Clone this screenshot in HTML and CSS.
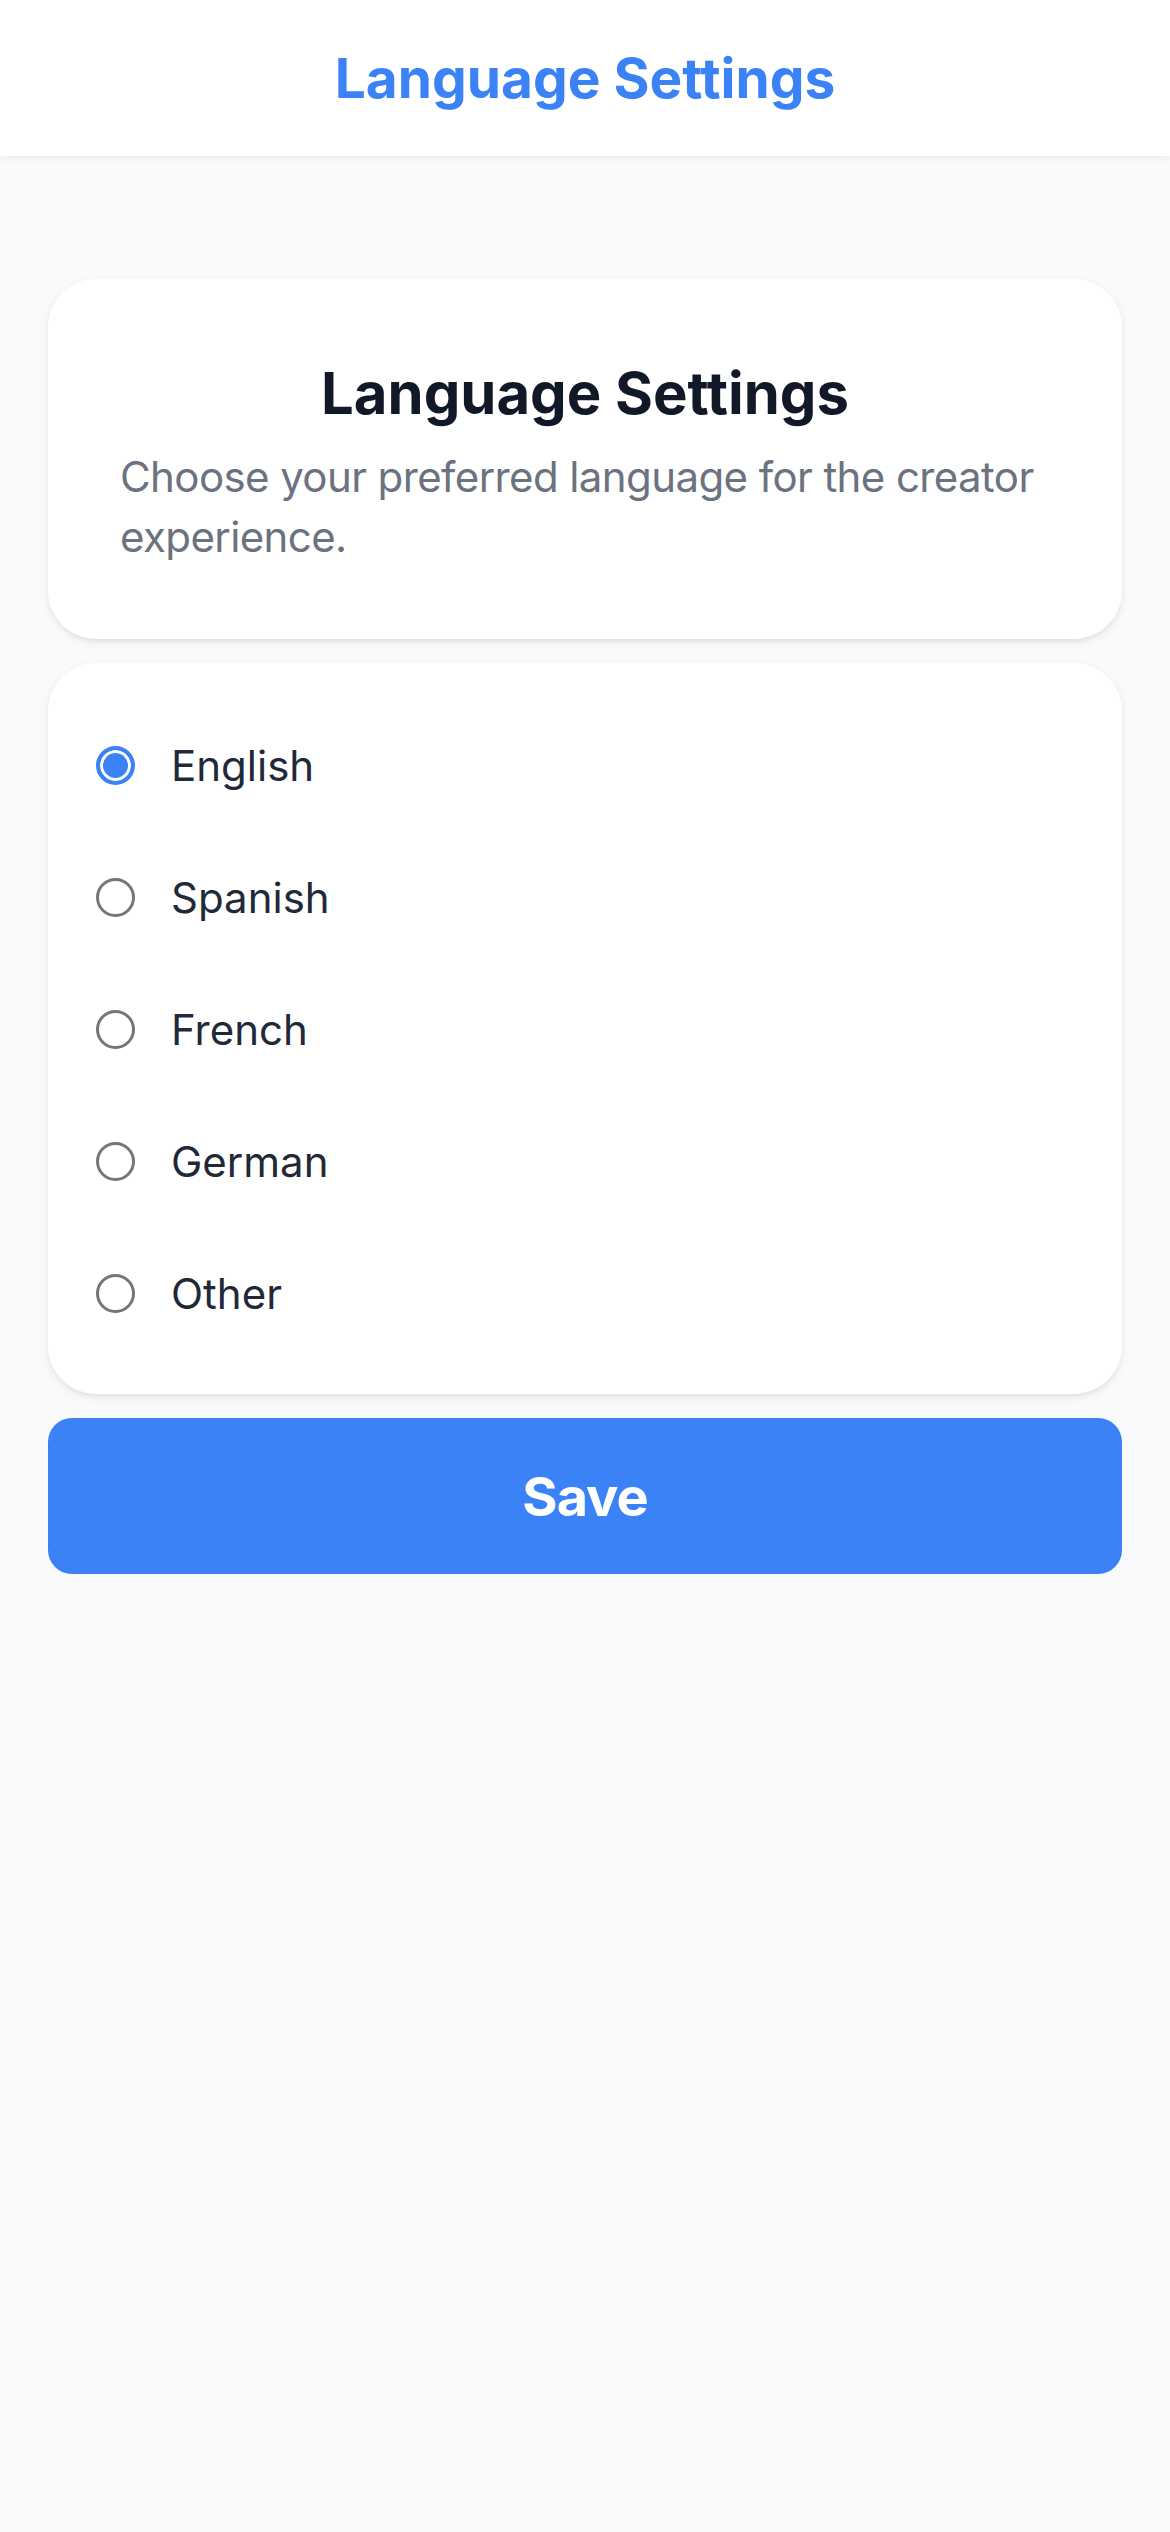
FILE: index.html
```html
<!DOCTYPE html>
<html lang="en">
<head>
<meta charset="utf-8">
<title>Language Settings</title>
<link rel="stylesheet" href="styles.css">
</head>
<body>
  <header class="topbar">
    <h1 class="topbar-title">Language Settings</h1>
  </header>
  <main class="content">
    <section class="card intro">
      <h2 class="intro-title">Language Settings</h2>
      <p class="intro-text">Choose your preferred language for the creator experience.</p>
    </section>
    <section class="card options">
      <label class="option"><input type="radio" name="lang" class="radio" checked><span class="option-label">English</span></label>
      <label class="option"><input type="radio" name="lang" class="radio"><span class="option-label">Spanish</span></label>
      <label class="option"><input type="radio" name="lang" class="radio"><span class="option-label">French</span></label>
      <label class="option"><input type="radio" name="lang" class="radio"><span class="option-label">German</span></label>
      <label class="option"><input type="radio" name="lang" class="radio"><span class="option-label">Other</span></label>
    </section>
    <button class="save-btn" type="button">Save</button>
  </main>
</body>
</html>
```
FILE: styles.css
```css
* { box-sizing: border-box; }
html, body { margin: 0; padding: 0; }
body {
  background: #f9fafb;
  font-family: Inter, "Noto Sans", "Liberation Sans", sans-serif;
  min-height: 2532px;
}
.topbar {
  height: 156px;
  background: #ffffff;
  display: flex;
  align-items: center;
  justify-content: center;
  box-shadow: 0 3px 6px rgba(0, 0, 0, 0.05);
  position: relative;
  z-index: 1;
}
.topbar-title {
  margin: 0;
  font-size: 55px;
  font-weight: 700;
  color: #3b82f6;
  line-height: 1;
}
.content {
  padding: 123px 48px 48px;
  display: flex;
  flex-direction: column;
}
.card {
  background: #ffffff;
  border-radius: 48px;
  box-shadow: 0 3px 9px rgba(0, 0, 0, 0.08), 0 3px 6px -3px rgba(0, 0, 0, 0.08);
}
.intro {
  padding: 72px;
}
.intro-title {
  margin: 0 0 12px;
  text-align: center;
  font-size: 58px;
  line-height: 84px;
  font-weight: 700;
  color: #111827;
}
.intro-text {
  margin: 0;
  font-size: 42px;
  line-height: 60px;
  letter-spacing: -0.6px;
  color: #6b7280;
}
.options {
  margin-top: 24px;
  padding: 36px 48px 35px;
  display: flex;
  flex-direction: column;
}
.option {
  height: 132px;
  display: flex;
  align-items: center;
  gap: 36px;
}
.radio {
  appearance: none;
  -webkit-appearance: none;
  margin: 0;
  width: 39px;
  height: 39px;
  flex: 0 0 39px;
  border-radius: 50%;
  border: 3px solid #767676;
  background: #ffffff;
}
.radio:checked {
  border: 4.5px solid #3b82f6;
  background: #3b82f6;
  box-shadow: inset 0 0 0 3px #ffffff;
}
.option-label {
  font-size: 42px;
  color: #1f2937;
}
.save-btn {
  margin-top: 24px;
  height: 156px;
  border: none;
  border-radius: 24px;
  background: #3b82f6;
  color: #ffffff;
  font-family: Inter, "Noto Sans", "Liberation Sans", sans-serif;
  font-size: 54px;
  font-weight: 700;
  letter-spacing: -1px;
}
```
